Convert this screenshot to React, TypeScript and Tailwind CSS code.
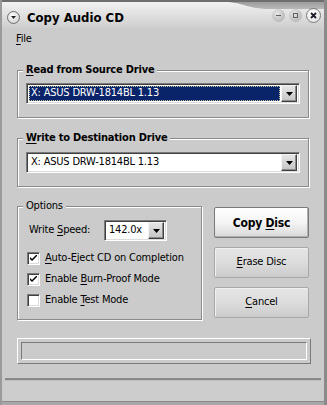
import React from "react";

const FONT = "font-['DejaVu_Sans_Condensed','DejaVu_Sans',sans-serif]";

function Arrow() {
  return (
    <svg width="7" height="4" viewBox="0 0 7 4">
      <path d="M0 0 H7 L3.5 4 Z" fill="#000" />
    </svg>
  );
}

function DropButton() {
  return (
    <div className="flex h-[17px] w-[16px] items-center justify-center border border-t-[#f4f4f4] border-l-[#f4f4f4] border-b-[#404040] border-r-[#404040] bg-[linear-gradient(#e6e6e6,#c4c4c4)] shadow-[inset_-1px_-1px_0_#8a8a8a]">
      <Arrow />
    </div>
  );
}

function Combo({ text, selected, width }: { text: string; selected?: boolean; width: string }) {
  return (
    <div
      className={`flex h-[21px] ${width} items-center border border-t-[#7a7a7a] border-l-[#7a7a7a] border-b-white border-r-white bg-white shadow-[inset_1px_1px_0_#404040,inset_-1px_-1px_0_#dcdcdc] pl-[2px] pr-[2px]`}
    >
      {selected ? (
        <div className="mr-[1px] flex h-[15px] flex-1 items-center border border-dotted border-[#c8c8a0] bg-[#0a246a] pl-[1px] text-white">
          {text}
        </div>
      ) : (
        <div className="flex h-[15px] flex-1 items-center pl-[2px] text-black">{text}</div>
      )}
      <DropButton />
    </div>
  );
}

function Check({ checked }: { checked?: boolean }) {
  return (
    <div className="flex h-[13px] w-[13px] items-center justify-center border border-t-[#7a7a7a] border-l-[#7a7a7a] border-b-white border-r-white bg-white shadow-[inset_1px_1px_0_#404040,inset_-1px_-1px_0_#dcdcdc]">
      {checked && (
        <svg width="7" height="7" viewBox="0 0 7 7">
          <path d="M0 2 L2 4 L7 -1 V1 L2 6 L0 4 Z" fill="#000" />
        </svg>
      )}
    </div>
  );
}

function U({ children }: { children: React.ReactNode }) {
  return <span className="underline underline-offset-[2px]">{children}</span>;
}

export default function App() {
  return (
    <div
      className={`${FONT} relative flex h-[405px] w-[327px] flex-col overflow-hidden border-l-[2px] border-r-[3px] border-l-[#9a9a9a] border-r-[#8a8a8a] bg-[#cbcbcb] text-[11px] tracking-[-0.2px] text-black`}
    >
      {/* Title bar */}
      <div className="relative flex h-[28px] items-center border-t-[2px] border-[#6e6e6e] bg-[linear-gradient(#f2f2f2,#dcdcdc_60%,#cfcfcf)] pl-[5px]">
        <svg className="absolute left-0 top-0" width="327" height="10" viewBox="0 0 327 10">
          <defs>
            <linearGradient id="tg" x1="0" y1="0" x2="0" y2="1">
              <stop offset="0" stopColor="#9c9c9c" />
              <stop offset="1" stopColor="#b8b8b8" />
            </linearGradient>
          </defs>
          <path d="M222 0 C240 0 246 7 268 7 L327 7 L327 0 Z" fill="url(#tg)" />
        </svg>
        <div className="relative mt-[5px] flex h-[13px] w-[13px] items-center justify-center rounded-full border border-[#707070] bg-[radial-gradient(circle_at_40%_35%,#ffffff,#c8c8c8)]">
          <svg width="5" height="3" viewBox="0 0 5 3">
            <path d="M0 0 H5 L2.5 3 Z" fill="#202020" />
          </svg>
        </div>
        <div className="relative ml-[7px] mt-[5px] text-[13px] font-bold leading-none tracking-[0px] text-black">Copy Audio CD</div>
        <div className="relative ml-auto mr-[3px] mt-[1px] flex items-center gap-[4px]">
          <div className="flex h-[13px] w-[13px] items-center justify-center rounded-full bg-[radial-gradient(circle_at_40%_35%,#e6e6e6,#a8a8a8)]">
            <div className="h-[1px] w-[5px] bg-[#606060]" />
          </div>
          <div className="flex h-[13px] w-[13px] items-center justify-center rounded-full bg-[radial-gradient(circle_at_40%_35%,#e6e6e6,#a8a8a8)]">
            <div className="h-[5px] w-[5px] border border-[#606060]" />
          </div>
          <div className="flex h-[15px] w-[15px] items-center justify-center rounded-full border border-[#7a7a7a] bg-[radial-gradient(circle_at_40%_35%,#ffffff,#dcdcdc)]">
            <svg width="7" height="7" viewBox="0 0 7 7">
              <path d="M1 1 L6 6 M6 1 L1 6" stroke="#1a1a2a" strokeWidth="1.8" />
            </svg>
          </div>
        </div>
      </div>

      {/* Menu */}
      <div className="flex h-[22px] items-center pl-[14px] pt-[1px]">
        <span>
          <U>F</U>ile
        </span>
      </div>

      <div className="flex flex-col px-[15px]">
        {/* Group 1 */}
        <fieldset className="mt-[13px] border border-[#8a8a8a] pb-[13px] pl-[8px] pt-[6px] shadow-[1px_1px_0_#fff,inset_1px_1px_0_#fff]">
          <legend className="ml-[-3px] bg-[#cbcbcb] px-[3px] text-[11px] font-bold leading-[14px]">
            <U>R</U>ead from Source Drive
          </legend>
          <Combo text="X: ASUS DRW-1814BL 1.13" selected width="w-[274px]" />
        </fieldset>

        {/* Group 2 */}
        <fieldset className="mt-[13px] border border-[#8a8a8a] pb-[13px] pl-[8px] pt-[7px] shadow-[1px_1px_0_#fff,inset_1px_1px_0_#fff]">
          <legend className="ml-[-3px] bg-[#cbcbcb] px-[3px] text-[11px] font-bold leading-[14px]">
            <U>W</U>rite to Destination Drive
          </legend>
          <Combo text="X: ASUS DRW-1814BL 1.13" width="w-[274px]" />
        </fieldset>

        {/* Options + buttons */}
        <div className="mt-[12px] flex">
          <fieldset className="w-[186px] border border-[#8a8a8a] pb-[12px] pl-[9px] pt-[7px] shadow-[1px_1px_0_#fff,inset_1px_1px_0_#fff]">
            <legend className="ml-[-4px] bg-[#cbcbcb] px-[3px] text-[11px] leading-[14px]">Options</legend>
            <div className="flex items-center">
              <span className="ml-[2px] w-[75px]">
                Write <U>S</U>peed:
              </span>
              <Combo text="142.0x" width="w-[63px]" />
            </div>
            <div className="mt-[10px] flex flex-col gap-[7px]">
              <div className="flex h-[14px] items-center gap-[5px]">
                <Check checked />
                <span>
                  <U>A</U>uto-Eject CD on Completion
                </span>
              </div>
              <div className="flex h-[14px] items-center gap-[5px]">
                <Check checked />
                <span>
                  Enable <U>B</U>urn-Proof Mode
                </span>
              </div>
              <div className="flex h-[14px] items-center gap-[5px]">
                <Check />
                <span>
                  Enable <U>T</U>est Mode
                </span>
              </div>
            </div>
          </fieldset>
          <div className="ml-[12px] flex flex-col gap-[9px] pt-[8px]">
            <button className="flex h-[31px] w-[95px] items-center justify-center rounded-[2px] border border-[#7a7a7a] bg-[linear-gradient(#ffffff,#f4f4f4_50%,#d8d8d8)] text-[12px] font-bold shadow-[inset_-1px_-1px_0_#b0b0b0]">
              Copy&nbsp;<U>D</U>isc
            </button>
            <button className="flex h-[31px] w-[95px] items-center justify-center rounded-[2px] border border-[#a8a8a8] bg-[linear-gradient(#e6e6e6,#dcdcdc_50%,#cbcbcb)] text-[11px] shadow-[inset_1px_1px_0_#efefef]">
              <U>E</U>rase Disc
            </button>
            <button className="flex h-[31px] w-[95px] items-center justify-center rounded-[2px] border border-[#a8a8a8] bg-[linear-gradient(#e6e6e6,#dcdcdc_50%,#cbcbcb)] text-[11px] shadow-[inset_1px_1px_0_#efefef]">
              <U>C</U>ancel
            </button>
          </div>
        </div>

        {/* Progress */}
        <div className="mt-[18px] h-[26px] w-[294px] border border-t-white border-l-white border-b-[#7a7a7a] border-r-[#7a7a7a] p-[3px]">
          <div className="h-full w-full border border-t-[#7a7a7a] border-l-[#7a7a7a] border-b-white border-r-white" />
        </div>
      </div>

      {/* Status bar */}
      <div className="mx-[3px] mt-auto h-[23px] border-t-[2px] border-[#8a8a8a] bg-[#cdcdcd] shadow-[inset_0_1px_0_#bdbdbd]" />
      <div className="h-[4px] border-t border-[#8a8a8a] bg-[#a8a8a8]" />
    </div>
  );
}
